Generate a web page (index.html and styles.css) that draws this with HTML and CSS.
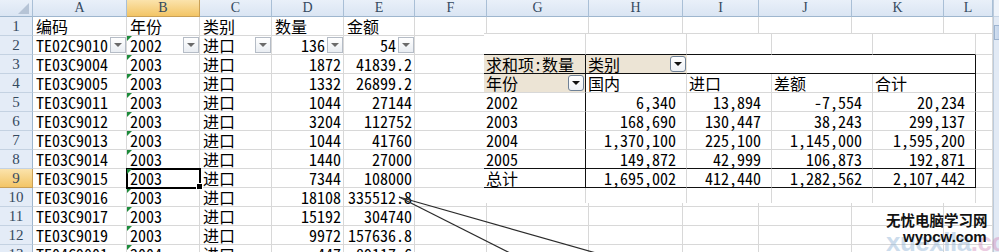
FILE: index.html
```html
<!DOCTYPE html>
<html lang="zh-CN">
<head>
<meta charset="utf-8">
<title>数据透视表</title>
<link rel="stylesheet" href="styles.css">
</head>
<body>
<div class="app">
  <div class="sheet">
    <div class="row hrow">
      <div class="h corner"><span class="tri"></span></div>
      <div class="h">A</div><div class="h sel">B</div><div class="h">C</div><div class="h">D</div><div class="h">E</div><div class="h">F</div><div class="h">G</div><div class="h">H</div><div class="h">I</div><div class="h">J</div><div class="h">K</div><div class="h">L</div>
    </div>
    <div class="row">
      <div class="rh">1</div>
      <div class="c">编码</div><div class="c">年份</div><div class="c">类别</div><div class="c">数量</div><div class="c">金额</div>
      <div class="c"></div><div class="c"></div><div class="c"></div><div class="c"></div><div class="c"></div><div class="c"></div><div class="c"></div>
    </div>
    <div class="row">
      <div class="rh">2</div>
      <div class="c fc"><span>TE02C9010</span><span class="fb"><i></i></span></div>
      <div class="c fc g"><span>2002</span><span class="fb"><i></i></span></div>
      <div class="c fc"><span>进口</span><span class="fb"><i></i></span></div>
      <div class="c fc n"><span>136</span><span class="fb nb"><i></i></span></div>
      <div class="c fc n"><span>54</span><span class="fb nb"><i></i></span></div>
      <div class="c"></div><div class="c"></div><div class="c"></div><div class="c"></div><div class="c"></div><div class="c"></div><div class="c"></div>
    </div>
    <div class="row">
      <div class="rh">3</div>
      <div class="c">TE03C9004</div><div class="c g">2003</div><div class="c">进口</div><div class="c n">1872</div><div class="c n">41839.2</div>
      <div class="c"></div><div class="c"></div><div class="c"></div><div class="c"></div><div class="c"></div><div class="c"></div><div class="c"></div>
    </div>
    <div class="row">
      <div class="rh">4</div>
      <div class="c">TE03C9005</div><div class="c g">2003</div><div class="c">进口</div><div class="c n">1332</div><div class="c n">26899.2</div>
      <div class="c"></div><div class="c"></div><div class="c"></div><div class="c"></div><div class="c"></div><div class="c"></div><div class="c"></div>
    </div>
    <div class="row">
      <div class="rh">5</div>
      <div class="c">TE03C9011</div><div class="c g">2003</div><div class="c">进口</div><div class="c n">1044</div><div class="c n">27144</div>
      <div class="c"></div><div class="c"></div><div class="c"></div><div class="c"></div><div class="c"></div><div class="c"></div><div class="c"></div>
    </div>
    <div class="row">
      <div class="rh">6</div>
      <div class="c">TE03C9012</div><div class="c g">2003</div><div class="c">进口</div><div class="c n">3204</div><div class="c n">112752</div>
      <div class="c"></div><div class="c"></div><div class="c"></div><div class="c"></div><div class="c"></div><div class="c"></div><div class="c"></div>
    </div>
    <div class="row">
      <div class="rh">7</div>
      <div class="c">TE03C9013</div><div class="c g">2003</div><div class="c">进口</div><div class="c n">1044</div><div class="c n">41760</div>
      <div class="c"></div><div class="c"></div><div class="c"></div><div class="c"></div><div class="c"></div><div class="c"></div><div class="c"></div>
    </div>
    <div class="row">
      <div class="rh">8</div>
      <div class="c">TE03C9014</div><div class="c g">2003</div><div class="c">进口</div><div class="c n">1440</div><div class="c n">27000</div>
      <div class="c"></div><div class="c"></div><div class="c"></div><div class="c"></div><div class="c"></div><div class="c"></div><div class="c"></div>
    </div>
    <div class="row">
      <div class="rh sel">9</div>
      <div class="c">TE03C9015</div><div class="c g active">2003</div><div class="c">进口</div><div class="c n">7344</div><div class="c n">108000</div>
      <div class="c"></div><div class="c"></div><div class="c"></div><div class="c"></div><div class="c"></div><div class="c"></div><div class="c"></div>
    </div>
    <div class="row">
      <div class="rh">10</div>
      <div class="c">TE03C9016</div><div class="c g">2003</div><div class="c">进口</div><div class="c n">18108</div><div class="c n">335512.8</div>
      <div class="c"></div><div class="c"></div><div class="c"></div><div class="c"></div><div class="c"></div><div class="c"></div><div class="c"></div>
    </div>
    <div class="row">
      <div class="rh">11</div>
      <div class="c">TE03C9017</div><div class="c g">2003</div><div class="c">进口</div><div class="c n">15192</div><div class="c n">304740</div>
      <div class="c"></div><div class="c"></div><div class="c"></div><div class="c"></div><div class="c"></div><div class="c"></div><div class="c"></div>
    </div>
    <div class="row">
      <div class="rh">12</div>
      <div class="c">TE03C9019</div><div class="c g">2003</div><div class="c">进口</div><div class="c n">9972</div><div class="c n">157636.8</div>
      <div class="c"></div><div class="c"></div><div class="c"></div><div class="c"></div><div class="c"></div><div class="c"></div><div class="c"></div>
    </div>
    <div class="row">
      <div class="rh">13</div>
      <div class="c">TE04C9001</div><div class="c g">2004</div><div class="c">进口</div><div class="c n">447</div><div class="c n">89117.6</div>
      <div class="c"></div><div class="c"></div><div class="c"></div><div class="c"></div><div class="c"></div><div class="c"></div><div class="c"></div>
    </div>
  </div>
  <div class="vscroll"><div class="vup"></div><div class="thumb"></div></div>

  <div class="pivot">
    <div class="p top"></div><div class="p top"></div><div class="p top"></div><div class="p top"></div><div class="p top"></div><div class="p"></div>

    <div class="p tan bb brk">求和项:数量</div>
    <div class="p tan bb nobr"><span>类别</span><span class="pdd flush"><i></i></span></div>
    <div class="p bb brk span3"></div>
    <div class="p"></div>

    <div class="p tan brk"><span>年份</span><span class="pdd"><i></i></span></div>
    <div class="p">国内</div><div class="p">进口</div><div class="p">差额</div><div class="p brk">合计</div><div class="p"></div>

    <div class="p brk">2002</div><div class="p num">6,340</div><div class="p num">13,894</div><div class="p num">-7,554</div><div class="p num brk">20,234</div><div class="p"></div>
    <div class="p brk">2003</div><div class="p num">168,690</div><div class="p num">130,447</div><div class="p num">38,243</div><div class="p num brk">299,137</div><div class="p"></div>
    <div class="p brk">2004</div><div class="p num">1,370,100</div><div class="p num">225,100</div><div class="p num">1,145,000</div><div class="p num brk">1,595,200</div><div class="p"></div>
    <div class="p brk bb">2005</div><div class="p num bb">149,872</div><div class="p num bb">42,999</div><div class="p num bb">106,873</div><div class="p num brk bb">192,871</div><div class="p"></div>
    <div class="p brk bb">总计</div><div class="p num bb">1,695,002</div><div class="p num bb">412,440</div><div class="p num bb">1,282,562</div><div class="p num brk bb">2,107,442</div><div class="p"></div>

    <div class="p last"></div><div class="p last"></div><div class="p last"></div><div class="p last"></div><div class="p last"></div><div class="p last"></div>
  </div>

  <svg class="arrows" width="999" height="252" viewBox="0 0 999 252">
    <line x1="399" y1="197" x2="596" y2="253" stroke="#2b2b2b" stroke-width="1.2"/>
    <line x1="399" y1="197" x2="510" y2="253" stroke="#2b2b2b" stroke-width="1.2"/>
  </svg>

  <div class="watermark">
    <div class="ghost"><span class="gb">xuexila</span><span class="gp">.com</span></div>
    <div class="wm1">无忧电脑学习网</div>
    <div class="wm2">wypcw.com</div>
  </div>
</div>
</body>
</html>
```
FILE: styles.css
```css
* { box-sizing: border-box; margin: 0; padding: 0; }
body {
  margin: 0;
  width: 999px;
  height: 252px;
  overflow: hidden;
  background: #fff;
  color: #000;
  font-family: "Noto Sans Mono CJK SC", "Noto Sans CJK SC", "Liberation Mono", monospace;
  font-size: 16px;
}
.app {
  position: relative;
  display: flex;
  width: 999px;
  height: 252px;
  overflow: hidden;
}
.sheet { width: 993px; flex: none; }
.row {
  display: grid;
  grid-template-columns: 33px 94px 73px 72px 72px 71px 72px 102px 94px 76px 93px 92px 49px;
  height: 19px;
}
.hrow { height: 17px; }

.h {
  background: linear-gradient(#e9f0f9, #dae5f3);
  border-right: 1px solid #a9bfd6;
  border-bottom: 1px solid #9eb6ce;
  display: flex;
  align-items: center;
  justify-content: center;
  font-family: "Liberation Serif", serif;
  font-size: 14px;
  color: #34495e;
  position: relative;
}
.h.sel, .rh.sel {
  background: linear-gradient(#fbe3ac, #f3c566);
  border-color: #c9a056;
}
.corner { justify-content: flex-end; }
.tri {
  position: absolute;
  right: 3px;
  bottom: 2px;
  width: 0;
  height: 0;
  border-left: 11px solid transparent;
  border-bottom: 11px solid #b6c4d6;
}
.rh {
  background: #e4ecf7;
  border-right: 1px solid #9eb6ce;
  border-bottom: 1px solid #c4d2e2;
  display: flex;
  align-items: center;
  justify-content: center;
  font-family: "Liberation Serif", serif;
  font-size: 15px;
  color: #34495e;
}
.c {
  position: relative;
  border-right: 1px solid #d8d8d8;
  border-bottom: 1px solid #d8d8d8;
  padding: 0 2px 0 3px;
  line-height: 18px;
  white-space: nowrap;
  display: flex;
  align-items: center;
}
.c.n { justify-content: flex-end; }
.c.fc { padding-right: 0; }
.fb {
  flex: none;
  margin-left: auto;
  width: 16px;
  height: 16px;
  border: 1px solid #b5bcc6;
  background: linear-gradient(#ffffff, #e9edf2);
  display: flex;
  align-items: center;
  justify-content: center;
}
.fb.nb { margin-left: 2px; }
.fb i {
  width: 0;
  height: 0;
  border-left: 4px solid transparent;
  border-right: 4px solid transparent;
  border-top: 4px solid #6a6a6a;
}
.g::before {
  content: "";
  position: absolute;
  left: 0;
  top: 0;
  width: 0;
  height: 0;
  border-top: 5px solid #1d8b3b;
  border-right: 5px solid transparent;
}
.active {
  outline: 2px solid #000;
  outline-offset: -1px;
  z-index: 1;
}
.active::after {
  content: "";
  position: absolute;
  right: -4px;
  bottom: -3px;
  width: 5px;
  height: 5px;
  background: #000;
  border: 1px solid #fff;
}

.vscroll {
  width: 6px;
  flex: none;
  background: #e2eaf5;
  border-left: 1px solid #bccbdc;
  position: relative;
}
.vup { height: 17px; background: #eef3fa; border-bottom: 1px solid #c6d4e4; }
.thumb {
  margin-top: 8px;
  height: 15px;
  background: linear-gradient(90deg, #d3e0f0, #c2d3ea);
  border: 1px solid #9db3cf;
  border-right: none;
}

.pivot {
  position: absolute;
  left: 484px;
  top: 33px;
  display: grid;
  grid-template-columns: 102px 101px 85px 101px 103px 17px;
  grid-template-rows: 21px repeat(7, 19px) 15px;
  background: #fff;
  border-top: 1px solid #d8d8d8;
  z-index: 2;
}
.p {
  border-right: 1px solid #d8d8d8;
  border-bottom: 1px solid #d8d8d8;
  padding: 0 2px;
  line-height: 18px;
  white-space: nowrap;
  display: flex;
  align-items: center;
}
.p.top { border-bottom-color: #111; }
.p.bb { border-bottom-color: #111; }
.p.brk { border-right-color: #111; }
.p.nobr { border-right-color: transparent; }
.p.span3 { grid-column: span 3; }
.p.tan { background: #ece4d5; }
.p.num { justify-content: flex-end; padding-right: 10px; }
.p.last { border-bottom: none; }
.pdd {
  flex: none;
  margin-left: auto;
  margin-right: -1px;
  width: 16px;
  height: 16px;
  border: 1px solid #6f8196;
  border-radius: 3px;
  background: linear-gradient(#ffffff, #eef1f5);
  display: flex;
  align-items: center;
  justify-content: center;
}
.pdd.flush { margin-right: -2px; }
.pdd i {
  width: 0;
  height: 0;
  border-left: 4px solid transparent;
  border-right: 4px solid transparent;
  border-top: 4px solid #111;
}

.arrows {
  position: absolute;
  left: 0;
  top: 0;
  z-index: 3;
  pointer-events: none;
}

.watermark {
  position: absolute;
  left: 886px;
  top: 211px;
  width: 110px;
  height: 41px;
  z-index: 4;
}
.ghost {
  position: absolute;
  left: 0;
  top: 16px;
  font-family: "Liberation Sans", Arial, sans-serif;
  font-weight: bold;
  font-size: 26px;
  line-height: 30px;
  letter-spacing: -0.5px;
  opacity: 0.45;
}
.gb { color: #8fb3d6; }
.gp { color: #d48fbd; }
.wm1 {
  position: relative;
  font-family: "Noto Sans CJK SC", sans-serif;
  font-weight: bold;
  font-size: 14.5px;
  line-height: 18px;
  color: #111;
}
.wm2 {
  position: relative;
  margin-left: 17px;
  font-family: "Liberation Sans", Arial, sans-serif;
  font-weight: bold;
  font-size: 15px;
  line-height: 15px;
  color: #111;
}
```
